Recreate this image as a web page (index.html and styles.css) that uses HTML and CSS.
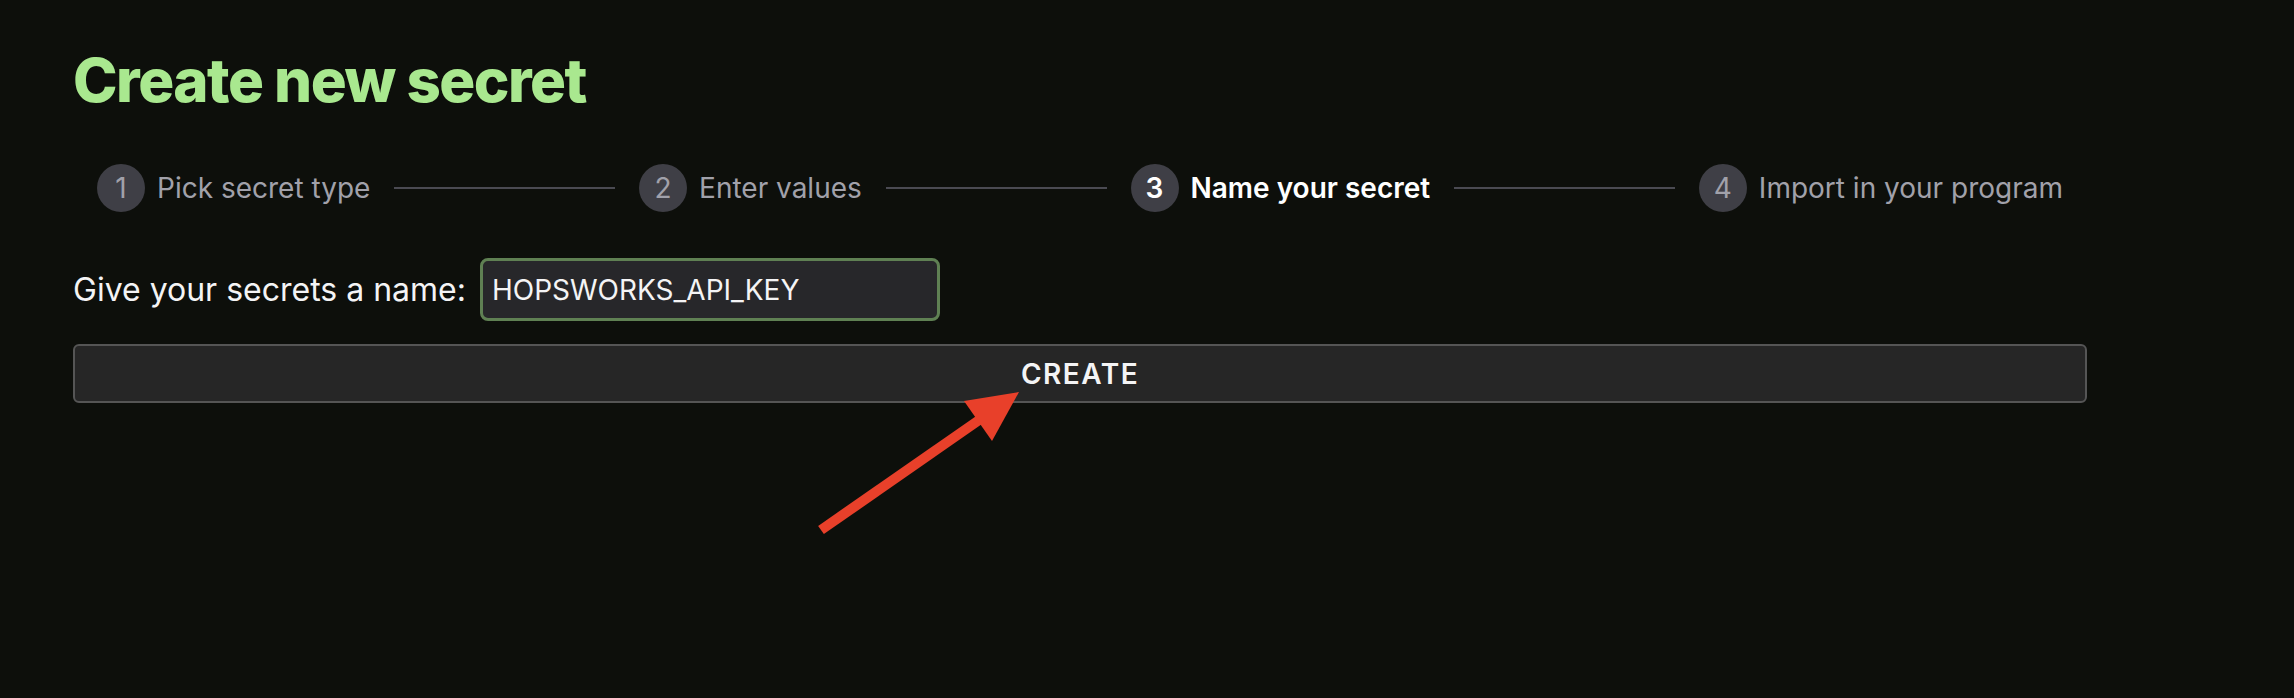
FILE: index.html
```html
<!DOCTYPE html>
<html lang="en">
<head>
<meta charset="utf-8">
<title>Create new secret</title>
<link rel="stylesheet" href="styles.css">
</head>
<body>
<main class="page">
  <h1 class="title">Create new secret</h1>
  <ol class="stepper">
    <li class="step"><span class="step-num">1</span><span class="step-label">Pick secret type</span></li>
    <li class="step-line"></li>
    <li class="step"><span class="step-num">2</span><span class="step-label">Enter values</span></li>
    <li class="step-line"></li>
    <li class="step step-active"><span class="step-num">3</span><span class="step-label">Name your secret</span></li>
    <li class="step-line"></li>
    <li class="step"><span class="step-num">4</span><span class="step-label">Import in your program</span></li>
  </ol>
  <div class="name-row">
    <label class="name-label" for="secret-name">Give your secrets a name:</label>
    <input class="name-input" id="secret-name" type="text" value="HOPSWORKS_API_KEY">
  </div>
  <button class="create-btn" type="button">CREATE</button>
</main>
<svg class="annotation" width="2294" height="698" viewBox="0 0 2294 698" aria-hidden="true">
  <line x1="821" y1="530" x2="982" y2="418" stroke="#e8402a" stroke-width="10"/>
  <polygon points="1019,392 964,401 992,441" fill="#e8402a"/>
</svg>
</body>
</html>
```
FILE: styles.css
```css
* { box-sizing: border-box; }
html, body { margin: 0; padding: 0; }
body {
  background: #0d0f0b;
  width: 2294px;
  height: 698px;
  overflow: hidden;
  font-family: Inter, "Noto Sans", "Liberation Sans", sans-serif;
  color: #f4f4f5;
  position: relative;
}
.page {
  width: 2014px;
  margin-left: 73px;
  padding-top: 44px;
}
.title {
  margin: 0;
  font-size: 60px;
  line-height: 72px;
  font-weight: 800;
  letter-spacing: -1.5px;
  color: #a9e88f;
}
.stepper {
  list-style: none;
  margin: 48px 0 0;
  padding: 0 24px;
  display: flex;
  align-items: center;
  height: 48px;
}
.step {
  display: flex;
  align-items: center;
  gap: 12px;
  flex: none;
}
.step-num {
  width: 48px;
  height: 48px;
  border-radius: 50%;
  background: #3f3f46;
  color: #a1a1aa;
  display: flex;
  align-items: center;
  justify-content: center;
  font-size: 28px;
}
.step-label {
  font-size: 28px;
  color: #a1a1aa;
  white-space: nowrap;
}
.step-active .step-num,
.step-active .step-label {
  color: #ffffff;
  font-weight: 600;
}
.step-line {
  flex: 1;
  height: 2px;
  background: #4a4a52;
  margin: 0 24px;
}
.name-row {
  display: flex;
  align-items: center;
  gap: 14px;
  margin-top: 46px;
  height: 63px;
}
.name-label {
  font-size: 32px;
  color: #f4f4f5;
}
.name-input {
  width: 460px;
  height: 63px;
  border: 3px solid #5f8053;
  border-radius: 8px;
  background: #27272a;
  color: #f4f4f5;
  font-family: inherit;
  font-size: 28px;
  padding: 0 9px;
  outline: none;
}
.create-btn {
  display: block;
  width: 100%;
  height: 59px;
  margin-top: 23px;
  border: 2px solid #555555;
  border-radius: 6px;
  background: #262626;
  color: #f4f4f5;
  font-family: inherit;
  font-size: 28px;
  font-weight: 600;
  letter-spacing: 1.5px;
  cursor: pointer;
}
.annotation {
  position: absolute;
  left: 0;
  top: 0;
  pointer-events: none;
}
```
